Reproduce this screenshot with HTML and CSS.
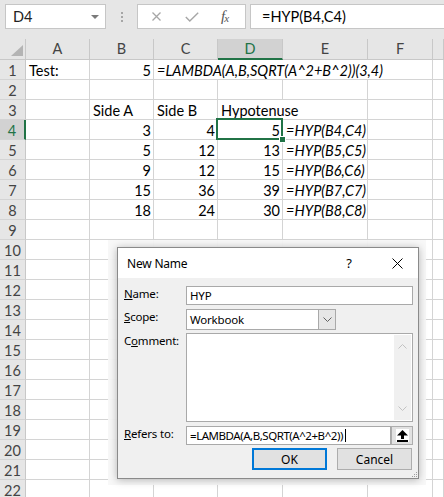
FILE: index.html
```html
<!DOCTYPE html>
<html lang="en">
  <head>
    <meta charset="UTF-8" />
    <meta name="viewport" content="width=device-width, initial-scale=1.0" />
    <title>New Name</title>
    <link rel="stylesheet" href="styles.css">
  </head>
  <body>
    <div class="toolbar">
      <div class="name-box">D4<span class="name-drop"></span></div>
      <div class="grip"><span></span><span></span><span></span></div>
      <div class="fx-box">
        <svg class="icon-cancel" width="9" height="9" viewBox="0 0 9 9">
          <path d="M0.5 0.5 L8.5 8.5 M8.5 0.5 L0.5 8.5" stroke="#a6a6a6" stroke-width="1.3" fill="none" />
        </svg>
        <svg class="icon-enter" width="14" height="10" viewBox="0 0 14 10">
          <path d="M0.8 5 L4.8 9 L13.2 0.8" stroke="#a6a6a6" stroke-width="1.4" fill="none" />
        </svg>
        <span class="fx">f<sub>x</sub></span>
      </div>
      <div class="formula">=HYP(B4,C4)</div>
    </div>

    <div class="sheet">
      <!-- column headers -->
      <div class="corner">
        <svg width="12" height="11" viewBox="0 0 12 11"><polygon points="0,11 12,11 12,0" fill="#b4b4b4" /></svg>
      </div>
      <div class="ch">A</div>
      <div class="ch">B</div>
      <div class="ch">C</div>
      <div class="ch ch-sel">D</div>
      <div class="ch">E</div>
      <div class="ch">F</div>
      <div class="ch"></div>

      <div class="rh">1</div>
      <div class="c">Test:</div>
      <div class="c num">5</div>
      <div class="c it span4">=LAMBDA(A,B,SQRT(A^2+B^2))(3,4)</div>
      <div class="c"></div>

      <div class="rh">2</div>
      <div class="c"></div><div class="c"></div><div class="c"></div><div class="c"></div><div class="c"></div><div class="c"></div><div class="c"></div>

      <div class="rh">3</div>
      <div class="c"></div>
      <div class="c">Side A</div>
      <div class="c">Side B</div>
      <div class="c span2">Hypotenuse</div>
      <div class="c"></div><div class="c"></div>

      <div class="rh rh-sel">4</div>
      <div class="c"></div>
      <div class="c num">3</div>
      <div class="c num">4</div>
      <div class="c num active">5</div>
      <div class="c it">=HYP(B4,C4)</div>
      <div class="c"></div><div class="c"></div>

      <div class="rh">5</div>
      <div class="c"></div>
      <div class="c num">5</div>
      <div class="c num">12</div>
      <div class="c num">13</div>
      <div class="c it">=HYP(B5,C5)</div>
      <div class="c"></div><div class="c"></div>

      <div class="rh">6</div>
      <div class="c"></div>
      <div class="c num">9</div>
      <div class="c num">12</div>
      <div class="c num">15</div>
      <div class="c it">=HYP(B6,C6)</div>
      <div class="c"></div><div class="c"></div>

      <div class="rh">7</div>
      <div class="c"></div>
      <div class="c num">15</div>
      <div class="c num">36</div>
      <div class="c num">39</div>
      <div class="c it">=HYP(B7,C7)</div>
      <div class="c"></div><div class="c"></div>

      <div class="rh">8</div>
      <div class="c"></div>
      <div class="c num">18</div>
      <div class="c num">24</div>
      <div class="c num">30</div>
      <div class="c it">=HYP(B8,C8)</div>
      <div class="c"></div><div class="c"></div>

      <div class="rh">9</div>
      <div class="c"></div><div class="c"></div><div class="c"></div><div class="c"></div><div class="c"></div><div class="c"></div><div class="c"></div>
      <div class="rh">10</div>
      <div class="c"></div><div class="c"></div><div class="c"></div><div class="c"></div><div class="c"></div><div class="c"></div><div class="c"></div>
      <div class="rh">11</div>
      <div class="c"></div><div class="c"></div><div class="c"></div><div class="c"></div><div class="c"></div><div class="c"></div><div class="c"></div>
      <div class="rh">12</div>
      <div class="c"></div><div class="c"></div><div class="c"></div><div class="c"></div><div class="c"></div><div class="c"></div><div class="c"></div>
      <div class="rh">13</div>
      <div class="c"></div><div class="c"></div><div class="c"></div><div class="c"></div><div class="c"></div><div class="c"></div><div class="c"></div>
      <div class="rh">14</div>
      <div class="c"></div><div class="c"></div><div class="c"></div><div class="c"></div><div class="c"></div><div class="c"></div><div class="c"></div>
      <div class="rh">15</div>
      <div class="c"></div><div class="c"></div><div class="c"></div><div class="c"></div><div class="c"></div><div class="c"></div><div class="c"></div>
      <div class="rh">16</div>
      <div class="c"></div><div class="c"></div><div class="c"></div><div class="c"></div><div class="c"></div><div class="c"></div><div class="c"></div>
      <div class="rh">17</div>
      <div class="c"></div><div class="c"></div><div class="c"></div><div class="c"></div><div class="c"></div><div class="c"></div><div class="c"></div>
      <div class="rh">18</div>
      <div class="c"></div><div class="c"></div><div class="c"></div><div class="c"></div><div class="c"></div><div class="c"></div><div class="c"></div>
      <div class="rh">19</div>
      <div class="c"></div><div class="c"></div><div class="c"></div><div class="c"></div><div class="c"></div><div class="c"></div><div class="c"></div>
      <div class="rh">20</div>
      <div class="c"></div><div class="c"></div><div class="c"></div><div class="c"></div><div class="c"></div><div class="c"></div><div class="c"></div>
      <div class="rh">21</div>
      <div class="c"></div><div class="c"></div><div class="c"></div><div class="c"></div><div class="c"></div><div class="c"></div><div class="c"></div>
      <div class="rh">22</div>
      <div class="c"></div><div class="c"></div><div class="c"></div><div class="c"></div><div class="c"></div><div class="c"></div><div class="c"></div>
    </div>

    <!-- New Name dialog -->
    <div class="dlg-wrap">
      <div class="dlg">
        <div class="dlg-title">
          <span class="dlg-caption">New Name</span>
          <span class="dlg-help">?</span>
          <span class="dlg-close">
            <svg width="11" height="11" viewBox="0 0 11 11">
              <path d="M0.5 0.5 L10.5 10.5 M10.5 0.5 L0.5 10.5" stroke="#000" stroke-width="1" fill="none" />
            </svg>
          </span>
        </div>
        <div class="dlg-body">
          <div class="field field-name">
            <label class="lbl"><u>N</u>ame:</label>
            <div class="text-box">HYP</div>
          </div>
          <div class="field field-scope">
            <label class="lbl"><u>S</u>cope:</label>
            <div class="select-box">
              <span class="select-value">Workbook</span>
              <span class="select-btn">
                <svg width="9" height="6" viewBox="0 0 9 6"><path d="M0.5 0.5 L4.5 4.5 L8.5 0.5" stroke="#606060" fill="none" /></svg>
              </span>
            </div>
          </div>
          <div class="field field-comment">
            <label class="lbl">C<u>o</u>mment:</label>
            <div class="memo">
              <div class="memo-scroll">
                <svg width="9" height="6" viewBox="0 0 9 6"><path d="M0.5 5.5 L4.5 1.5 L8.5 5.5" stroke="#c2c2c2" fill="none" /></svg>
                <svg width="9" height="6" viewBox="0 0 9 6"><path d="M0.5 0.5 L4.5 4.5 L8.5 0.5" stroke="#c2c2c2" fill="none" /></svg>
              </div>
            </div>
          </div>
          <div class="field field-refers">
            <label class="lbl"><u>R</u>efers to:</label>
            <div class="text-box refers">=LAMBDA(A,B,SQRT(A^2+B^2))<span class="caret"></span></div>
            <span class="collapse-btn">
              <svg width="13" height="13" viewBox="0 0 13 13">
                <polygon points="6.5,1 12,6.5 1,6.5" fill="#000" />
                <rect x="5" y="6" width="3" height="4" fill="#000" />
                <rect x="1" y="11" width="11" height="2" fill="#000" />
              </svg>
            </span>
          </div>
          <div class="buttons">
            <button type="button" class="btn btn-ok">OK</button>
            <button type="button" class="btn">Cancel</button>
          </div>
          <svg class="size-grip" width="7" height="7" viewBox="0 0 7 7">
            <rect x="5" y="1" width="1" height="1" fill="#a0a0a0" />
            <rect x="3" y="3" width="1" height="1" fill="#a0a0a0" />
            <rect x="5" y="3" width="1" height="1" fill="#a0a0a0" />
            <rect x="1" y="5" width="1" height="1" fill="#a0a0a0" />
            <rect x="3" y="5" width="1" height="1" fill="#a0a0a0" />
            <rect x="5" y="5" width="1" height="1" fill="#a0a0a0" />
          </svg>
        </div>
      </div>
    </div>
  </body>
</html>
```

FILE: styles.css
```css
* {
  box-sizing: border-box;
}
body {
  margin: 0;
  width: 444px;
  height: 497px;
  overflow: hidden;
  position: relative;
  background: #ffffff;
  font-family: Lato, "Liberation Sans", sans-serif;
  font-size: 14.5px;
  color: #000;
}

/* formula bar */
.toolbar {
  height: 39px;
  background: #e6e6e6;
  display: flex;
  align-items: flex-start;
  padding: 4px 0 0 5px;
}
.name-box {
  width: 101px;
  height: 25px;
  background: #fff;
  border: 1px solid #c6c6c6;
  display: flex;
  align-items: center;
  padding-left: 7px;
  color: #222;
}
.name-drop {
  margin-left: auto;
  margin-right: 6px;
  width: 0;
  height: 0;
  border-left: 4px solid transparent;
  border-right: 4px solid transparent;
  border-top: 4px solid #7a7a7a;
}
.grip {
  width: 31px;
  height: 25px;
  display: flex;
  flex-direction: column;
  align-items: center;
  padding-top: 8px;
  gap: 2px;
}
.grip span {
  width: 2px;
  height: 2px;
  background: #a6a6a6;
}
.fx-box {
  width: 109px;
  height: 25px;
  background: #fff;
  border: 1px solid #c6c6c6;
  display: flex;
  align-items: center;
  padding-left: 14px;
}
.icon-enter {
  margin-left: 24px;
}
.fx {
  margin-left: 22px;
  font-family: "Liberation Serif", serif;
  font-style: italic;
  font-size: 15px;
  color: #555;
  letter-spacing: -1px;
}
.fx sub {
  font-size: 11px;
  vertical-align: -1px;
}
.formula {
  flex: 1;
  height: 25px;
  margin-left: 4px;
  margin-right: -2px;
  background: #fff;
  border: 1px solid #c6c6c6;
  padding-left: 11px;
  line-height: 23px;
}

/* grid */
.sheet {
  display: grid;
  grid-template-columns: 26px 64px 64px 64px 65px 85px 65px 1fr;
  grid-template-rows: 21px;
  grid-auto-rows: 20px;
}
.corner,
.ch,
.rh {
  background: #e6e6e6;
  color: #444;
  border-right: 1px solid #c8c8c8;
  border-bottom: 1px solid #c8c8c8;
  text-align: center;
}
.corner {
  display: flex;
  justify-content: flex-end;
  align-items: flex-end;
  padding: 0 2px 3px 0;
}
.ch {
  line-height: 20px;
}
.ch-sel {
  background: #d2d2d2;
  color: #217346;
  border-bottom: 2px solid #217346;
}
.rh {
  line-height: 19px;
  padding-top: 1px;
  border-bottom-color: #d4d4d4;
}
.rh-sel {
  background: #d2d2d2;
  color: #217346;
  border-right: 2px solid #217346;
}
.c {
  border-right: 1px solid #d4d4d4;
  border-bottom: 1px solid #d4d4d4;
  padding: 1px 2px 0 3px;
  line-height: 19px;
  white-space: nowrap;
  background: #fff;
}
.num {
  text-align: right;
}
.it {
  font-style: italic;
}
.span4 {
  grid-column: span 4;
}
.span2 {
  grid-column: span 2;
}
.active {
  position: relative;
}
.active::before {
  content: "";
  position: absolute;
  top: -2px;
  left: -2px;
  right: -1px;
  bottom: -1px;
  border: 2px solid #217346;
}
.active::after {
  content: "";
  position: absolute;
  right: -3px;
  bottom: -3px;
  width: 5px;
  height: 5px;
  background: #217346;
  outline: 1px solid #fff;
}

/* dialog */
.dlg-wrap {
  position: absolute;
  left: 108px;
  top: 240px;
  width: 318px;
  height: 245px;
  background: rgba(248, 248, 248, 0.95);
  padding: 7px 0 0 9px;
  font-family: "Noto Sans", "Open Sans", sans-serif;
  font-size: 11.5px;
  letter-spacing: -0.2px;
}
.dlg {
  width: 302px;
  border: 1px solid #8a8a8a;
  box-shadow: 0 1px 8px rgba(0, 0, 0, 0.28);
  background: #f0f0f0;
}
.dlg-title {
  height: 30px;
  background: #fff;
  display: flex;
  align-items: center;
  padding: 0 6px 0 9px;
  font-size: 12px;
}
.dlg-caption {
  flex: 1;
}
.dlg-help {
  width: 12px;
  text-align: center;
  margin-right: 27px;
  font-size: 13px;
}
.dlg-close {
  width: 30px;
  display: flex;
  justify-content: center;
}
.dlg-body {
  position: relative;
  padding: 8px 5px 8px 6px;
}
.field {
  display: flex;
  align-items: flex-start;
}
.lbl {
  width: 62px;
  line-height: 15px;
}
.field-name {
  height: 19px;
}
.field-scope {
  height: 21px;
  margin-top: 4px;
}
.field-comment {
  height: 89px;
  margin-top: 3px;
}
.field-refers {
  height: 19px;
  margin-top: 4px;
}
.text-box {
  flex: 1;
  height: 19px;
  background: #fff;
  border: 1px solid #a9a9a9;
  padding-left: 3px;
  line-height: 17px;
  white-space: nowrap;
}
.refers {
  letter-spacing: -0.45px;
}
.caret {
  display: inline-block;
  width: 1px;
  height: 13px;
  background: #000;
  vertical-align: -2px;
  margin-left: 2px;
}
.collapse-btn {
  width: 22px;
  height: 19px;
  background: #e1e1e1;
  border: 1px solid #adadad;
  display: flex;
  align-items: center;
  justify-content: center;
}
.collapse-btn svg {
  background: #fff;
}
.select-box {
  width: 150px;
  height: 21px;
  background: #fff;
  border: 1px solid #a9a9a9;
  display: flex;
}
.select-value {
  flex: 1;
  padding-left: 3px;
  line-height: 19px;
}
.select-btn {
  width: 17px;
  background: #e6e6e6;
  border-left: 1px solid #a9a9a9;
  display: flex;
  align-items: center;
  justify-content: center;
}
.memo {
  flex: 1;
  height: 89px;
  background: #fff;
  border: 1px solid #a9a9a9;
  display: flex;
  justify-content: flex-end;
  padding: 1px;
}
.memo-scroll {
  width: 17px;
  background: #f0f0f0;
  display: flex;
  flex-direction: column;
  align-items: center;
  justify-content: space-between;
  padding: 8px 0 8px;
}
.buttons {
  display: flex;
  justify-content: flex-end;
  gap: 10px;
  margin-top: 3px;
  padding-right: 1px;
}
.btn {
  width: 75px;
  height: 22px;
  background: #e1e1e1;
  border: 1px solid #adadad;
  font-family: inherit;
  font-size: 12px;
  color: #000;
  padding: 0;
}
.btn-ok {
  border: 2px solid #0078d7;
}
.size-grip {
  position: absolute;
  right: 0;
  bottom: 0;
}
```
